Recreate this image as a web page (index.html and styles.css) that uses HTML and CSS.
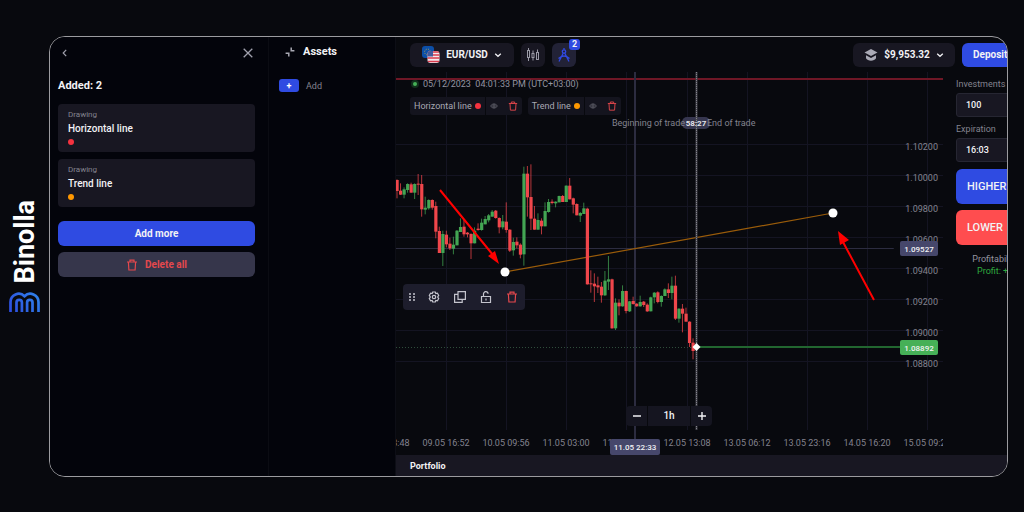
FILE: index.html
```html
<!DOCTYPE html>
<html lang="en">
<head>
<meta charset="utf-8">
<title>Binolla</title>
<link rel="stylesheet" href="styles.css">
</head>
<body>
<svg class="defs" aria-hidden="true">
  <symbol id="trash" viewBox="0 0 12 12"><path d="M1 3h10M4 3V1.2h4V3M2.4 3l.5 8h6.2l.5-8" fill="none" stroke="currentColor" stroke-width="1.2"/></symbol>
  <symbol id="eye" viewBox="0 0 12 12"><path d="M.8 6Q6 -.4 11.200 6 6 12.400 .8 6z" fill="none" stroke="currentColor" stroke-width="1.300"/><circle cx="6" cy="6" r="1.800" fill="none" stroke="currentColor" stroke-width="1.300"/></symbol>
  <symbol id="chevron" viewBox="0 0 8 8"><path d="M1.200 2.800 4 5.300 6.800 2.800" fill="none" stroke="currentColor" stroke-width="1.300"/></symbol>
</svg>

<aside class="brand">
  <span class="brand-name">Binolla</span>
  <svg class="brand-logo" viewBox="0 0 31 20">
    <defs><linearGradient id="logo" gradientUnits="userSpaceOnUse" x1="0" y1="20" x2="31" y2="0"><stop offset="0" stop-color="#2d4be0"/><stop offset="1" stop-color="#2f86ea"/></linearGradient></defs>
    <g fill="none" stroke="url(#logo)" stroke-width="2.700">
      <path d="M1.500 20V10A8.200 8.200 0 0 1 15.500 4.200 8.200 8.200 0 0 1 29.500 10V20"/>
      <path d="M7.500 20v-9.500a2.700 2.700 0 0 1 5.400 0V20M18.100 20v-9.500a2.700 2.700 0 0 1 5.400 0V20"/>
    </g>
  </svg>
</aside>

<div class="frame">
  <section class="drawings">
    <header class="drawings-head">
      <button class="bare" aria-label="Back"><svg class="i8" viewBox="0 0 8 8"><path d="M5.200.8 2.200 4l3 3.200" fill="none" stroke="currentColor" stroke-width="1.200"/></svg></button>
      <button class="bare" aria-label="Close"><svg class="i10" viewBox="0 0 10 10"><path d="M.7.7l8.600 8.600M9.300.7.7 9.300" stroke="currentColor" stroke-width="1.300"/></svg></button>
    </header>
    <h2 class="added">Added: 2</h2>
    <article class="card"><span class="card-kind">Drawing</span><span class="card-title">Horizontal line</span><i class="dot red"></i></article>
    <article class="card"><span class="card-kind">Drawing</span><span class="card-title">Trend line</span><i class="dot orange"></i></article>
    <button class="wide primary">Add more</button>
    <button class="wide muted"><svg class="i12"><use href="#trash"/></svg>Delete all</button>
  </section>

  <section class="assets">
    <h2 class="assets-title"><svg class="i10" viewBox="0 0 10 10"><path d="M6.200.6v3.200h3.200M.6 6.200h3.200v3.200" fill="none" stroke="#a9a9b4" stroke-width="1.500"/></svg>Assets</h2>
    <div class="assets-add"><button class="plus" id="add" aria-label="Add asset">+</button><label for="add">Add</label></div>
  </section>

  <main class="main">
    <header class="topbar">
      <button class="box pair">
        <svg class="flags" viewBox="0 0 18 18">
          <rect width="12" height="12" rx="3" fill="#0c4fa8"/>
          <circle cx="5.500" cy="6" r="2.900" fill="none" stroke="#b3a24a" stroke-width="1" stroke-dasharray="1 1.300"/>
          <clipPath id="us"><rect x="5.500" y="5" width="12" height="12" rx="3"/></clipPath>
          <g clip-path="url(#us)"><rect x="5" y="5" width="13" height="13" fill="#f1e9ec"/><path d="M5 6h13M5 9h13M5 12h13M5 15.400h13" stroke="#d93a4c" stroke-width="1.500"/><rect x="5" y="5" width="6" height="5.500" fill="#43599a"/></g>
        </svg>
        <span>EUR/USD</span><svg class="i8"><use href="#chevron"/></svg>
      </button>
      <button class="box square" aria-label="Chart type"><svg class="i14" viewBox="0 0 14 14"><g fill="none" stroke="#9a9aa6"><rect x="1.500" y="2.500" width="2" height="7"/><rect x="6" y="5.500" width="2" height="4"/><rect x="10.500" y="4.500" width="2" height="7"/><path d="M2.500 0v2.500M2.500 9.500V13M7 2.500v3M7 9.500v3M11.500 1.500v3"/></g></svg></button>
      <button class="box square active" aria-label="Drawings"><svg class="i14" viewBox="0 0 14 14"><g fill="none" stroke="#3048e0" stroke-width="1.300"><circle cx="7" cy="3.500" r="1.700"/><path d="M7 0v1.800M6.300 5 2 13.500M7.700 5 12 13.500M1.500 10.500Q7 5.500 12.500 10.500"/></g></svg><span class="badge">2</span></button>
      <button class="box balance"><svg class="i14" viewBox="0 0 14 14"><path d="M7 1 13.500 4.500 7 8 .5 4.500z" fill="#aaaab6"/><path d="M2 7.300 7 10l5-2.700v2.900C10.500 13.500 3.500 13.500 2 10.200z" fill="#aaaab6"/></svg><span>$9,953.32</span><svg class="i8"><use href="#chevron"/></svg></button>
      <button class="deposit">Deposit</button>
    </header>

    <div class="work">
      <div class="chart">
        <svg class="plot" id="plot">
          <g id="grid"></g>
          <line class="alert" x1="0" y1="7" x2="100%" y2="7"/>
          <line class="cross" x1="239" y1="0" x2="239" y2="368"/>
          <line class="cross thin" x1="0" y1="176.500" x2="91%" y2="176.500"/>
          <line class="trend" x1="109" y1="200" x2="437" y2="141"/>
          <line class="open-line" x1="0" y1="275.500" x2="300" y2="275.500"/>
          <line class="price-line" x1="300" y1="275" x2="93%" y2="275"/>
          <g id="candles" transform="translate(1 68)"></g>
          <rect x="286" y="45" width="28" height="12" rx="5" fill="#36364f"/>
          <line class="expiry" x1="300.500" y1="0" x2="300.500" y2="358"/>
          <line class="expiry-dots" x1="300.500" y1="0" x2="300.500" y2="358"/>
          <text class="label" x="289" y="54" text-anchor="end">Beginning of trade</text>
          <text class="pill-text" x="300" y="54" text-anchor="middle">58:27</text>
          <text class="label" x="311" y="54">End of trade</text>
          <circle cx="109" cy="200" r="4.500" fill="#fff"/>
          <circle cx="437" cy="141" r="4.500" fill="#fff"/>
          <path d="M300.500 271l4 4-4 4-4-4z" fill="#fff"/>
          <g fill="#f00" stroke="#f00"><path d="M44 118l53 65M478 228l-31-58" stroke-width="2"/><path d="M103 192l-11-8 7-5zM442 159l2 14 9-5z" stroke="none"/></g>
          <g id="dates"></g>
          <rect x="214" y="367" width="50" height="16" rx="2" fill="#46476b"/>
          <text class="tag-text" x="239" y="378" text-anchor="middle">11.05 22:33</text>
          <svg x="100%" overflow="visible">
            <g id="prices"></g>
            <rect x="-43" y="169" width="38" height="15" rx="2" fill="#46476b"/>
            <text class="tag-text" x="-24" y="180" text-anchor="middle">1.09527</text>
            <rect x="-43" y="268" width="38" height="15" rx="2" fill="#46b057"/>
            <text class="tag-text" x="-24" y="279" text-anchor="middle">1.08892</text>
          </svg>
        </svg>

        <div class="legend">
          <div class="clock"><i class="live"></i>05/12/2023&nbsp; 04:01:33 PM (UTC+03:00)</div>
          <div class="chips">
            <div class="chip"><span class="chip-name">Horizontal line<i class="dot red"></i></span><span class="chip-tools"><button class="bare" aria-label="Hide"><svg class="i8"><use href="#eye"/></svg></button><button class="bare danger" aria-label="Delete"><svg class="i10"><use href="#trash"/></svg></button></span></div>
            <div class="chip"><span class="chip-name">Trend line<i class="dot orange"></i></span><span class="chip-tools"><button class="bare" aria-label="Hide"><svg class="i8"><use href="#eye"/></svg></button><button class="bare danger" aria-label="Delete"><svg class="i10"><use href="#trash"/></svg></button></span></div>
          </div>
        </div>

        <div class="tools">
          <button class="tool grip" aria-label="Move"><svg class="i10" viewBox="0 0 10 10"><path d="M2 2h2M6 2h2M2 5h2M6 5h2M2 8h2M6 8h2" stroke="currentColor" stroke-width="1.500"/></svg></button>
          <button class="tool" aria-label="Settings"><svg class="i12" viewBox="0 0 12 12"><path d="M4.700 1h2.600l.5 1.500 1.600-.3 1.300 2.200L9.700 6l1 1.600-1.300 2.200-1.600-.3-.5 1.500H4.700l-.5-1.500-1.600.3-1.300-2.200L2.300 6l-1-1.600 1.300-2.200 1.600.3z" fill="none" stroke="currentColor" stroke-width="1.200"/><circle cx="6" cy="6" r="1.700" fill="none" stroke="currentColor" stroke-width="1.200"/></svg></button>
          <button class="tool" aria-label="Duplicate"><svg class="i12" viewBox="0 0 12 12"><path d="M4 .6h7.400v7.800H4zM4 3.400H.6v8h7.600V8.400" fill="none" stroke="currentColor" stroke-width="1.200"/></svg></button>
          <button class="tool" aria-label="Unlock"><svg class="i12" viewBox="0 0 12 12"><path d="M1.500 5.500h9v6h-9zM3.500 5.500V3.200a2.300 2.300 0 0 1 4.600-.4M6 7.500v2" fill="none" stroke="currentColor" stroke-width="1.200"/></svg></button>
          <button class="tool danger" aria-label="Delete"><svg class="i12"><use href="#trash"/></svg></button>
        </div>

        <div class="zoom">
          <button class="zoom-btn" aria-label="Zoom out"><svg class="i8" viewBox="0 0 8 8"><path d="M0 4h8" stroke="currentColor" stroke-width="1.400"/></svg></button>
          <button class="zoom-btn period">1h</button>
          <button class="zoom-btn" aria-label="Zoom in"><svg class="i8" viewBox="0 0 8 8"><path d="M0 4h8M4 0v8" stroke="currentColor" stroke-width="1.400"/></svg></button>
        </div>
      </div>

      <form class="trade">
        <label class="field" for="inv">Investments</label>
        <input class="input" id="inv" value="100">
        <label class="field" for="exp">Expiration</label>
        <input class="input" id="exp" value="16:03">
        <button class="order higher" type="button">HIGHER</button>
        <button class="order lower" type="button">LOWER</button>
        <p class="profitability">Profitability</p>
        <p class="profit">Profit: +</p>
      </form>
    </div>

    <footer class="portfolio">Portfolio</footer>
  </main>
</div>
<script src="chart.js"></script>
</body>
</html>
```

FILE: styles.css
```css
* { box-sizing: border-box; }
body {
  margin: 0;
  min-height: 100vh;
  display: grid;
  grid-template-columns: 49px 1fr;
  background: #08090e;
  color: #f2f2f5;
  font: 9px/12px Roboto, sans-serif;
}
button, input { font: inherit; color: inherit; border: 0; padding: 0; margin: 0; }
h2, p { margin: 0; }
svg { display: block; flex: none; }
.defs { position: absolute; width: 0; height: 0; }
.i8 { width: 8px; height: 8px; }
.i10 { width: 10px; height: 10px; }
.i12 { width: 12px; height: 12px; }
.i14 { width: 14px; height: 14px; }
.bare { display: flex; background: none; color: #a0a0ad; }
.danger { color: #e5484d; }
.dot { display: block; width: 6px; height: 6px; border-radius: 50%; }
.red { background: #f5323f; }
.orange { background: #ff9800; }

.brand { display: flex; flex-direction: column; align-items: center; justify-content: center; gap: 9px; }
.brand-name {
  writing-mode: vertical-rl;
  transform: rotate(180deg);
  font-size: 27px;
  line-height: 32px;
  font-weight: 700;
  color: #fff;
}
.brand-logo { width: 31px; height: 20px; }

.frame {
  display: flex;
  margin: 36px 16px 35px 0;
  border: 1px solid #9b9b9f;
  border-radius: 16px;
  overflow: hidden;
}

.drawings {
  flex: 0 0 219px;
  display: flex;
  flex-direction: column;
  padding: 10px 13px 0 8px;
  background: #03040b;
  border-right: 1px solid #0b0c13;
}
.drawings-head { display: flex; justify-content: space-between; align-items: center; height: 12px; padding: 0 2px 0 3px; }
.added { margin: 20px 0 11px; font-size: 11px; line-height: 14px; font-weight: 700; }
.card {
  display: flex;
  flex-direction: column;
  height: 48px;
  margin-bottom: 7px;
  padding: 5px 10px;
  border-radius: 4px;
  background: #181722;
}
.card-kind { font-size: 8px; color: #83838f; }
.card-title { font-size: 10px; line-height: 16px; font-weight: 500; margin-bottom: 2px; }
.wide {
  display: flex;
  align-items: center;
  justify-content: center;
  gap: 7px;
  height: 25px;
  margin-top: 6px;
  border-radius: 6px;
  font-size: 10px;
  font-weight: 700;
}
.primary { background: #2f4be2; margin-top: 7px; }
.muted { background: #36364b; color: #e5484d; }

.assets { flex: 0 0 127px; padding: 7px 10px; background: #03040b; border-right: 1px solid #0d0e16; }
.assets-title { display: flex; align-items: center; gap: 8px; padding-left: 6px; font-size: 11px; line-height: 16px; font-weight: 700; }
.assets-add { display: flex; align-items: center; gap: 7px; margin-top: 19px; color: #83838f; }
.plus { width: 20px; height: 13px; border-radius: 3px; background: #2f4be2; color: #fff; font-weight: 700; line-height: 12px; }

.main { flex: 1; min-width: 0; display: flex; flex-direction: column; }
.topbar { display: flex; align-items: center; gap: 7px; height: 35px; padding-left: 14px; }
.box {
  position: relative;
  display: flex;
  align-items: center;
  justify-content: center;
  height: 24px;
  border-radius: 6px;
  background: #181722;
  font-size: 10px;
  font-weight: 700;
}
.pair { width: 104px; gap: 6px; }
.flags { width: 18px; height: 18px; }
.square { width: 24px; }
.active { background: #222236; }
.badge {
  position: absolute;
  top: -4px;
  right: -4px;
  width: 11px;
  height: 11px;
  border-radius: 3px;
  background: #2f4be2;
  font-size: 9px;
  line-height: 11px;
}
.balance { width: 102px; gap: 6px; margin-left: auto; }
.deposit {
  flex: 0 0 60px;
  height: 24px;
  margin-right: -15px;
  padding-left: 11px;
  border-radius: 6px;
  background: #2f4be2;
  font-size: 10px;
  font-weight: 700;
  text-align: left;
}

.work { flex: 1; display: flex; min-height: 0; }
.chart { position: relative; flex: 1; min-width: 0; overflow: hidden; }
.plot { position: absolute; width: 100%; height: 100%; }
.grid-line { stroke: #141422; }
.alert { stroke: #6f1726; stroke-width: 2; }
.cross { stroke: #2c2c40; stroke-width: 2; }
.thin { stroke-width: 1; }
.trend { stroke: #9a5c0a; stroke-width: 1.2; }
.open-line { stroke: #2f4d3b; stroke-dasharray: 1 2; }
.price-line { stroke: #226630; stroke-width: 2; }
.expiry { stroke: #45454d; stroke-width: 2; }
.expiry-dots { stroke: #84848c; stroke-dasharray: 1 1; }
.label { font-size: 9px; fill: #83838f; }
.pill-text { font-size: 8px; font-weight: 700; fill: #e4e4ea; }
.tag-text { font-size: 8px; font-weight: 500; fill: #f2f2f5; }
.up { fill: #43a553; }
.down { fill: #f0464b; }

.legend { position: relative; padding: 5px 14px; }
.clock { display: flex; align-items: center; gap: 6px; padding-left: 3px; color: #9494a0; line-height: 14px; }
.live { width: 4px; height: 4px; border-radius: 50%; background: #46b057; box-shadow: 0 0 0 2px #11301c; }
.chips { display: flex; gap: 6px; margin-top: 6px; }
.chip { display: flex; gap: 1px; height: 18px; color: #a9a9b4; }
.chip-name, .chip-tools { display: flex; align-items: center; background: #14141e; }
.chip-name { gap: 3px; padding: 0 4px; border-radius: 3px 0 0 3px; }
.chip-tools { gap: 10px; padding: 0 4px; border-radius: 0 3px 3px 0; }
.chip-tools .bare { color: #696974; }
.chip-tools .danger { color: #d54348; }

.tools {
  position: absolute;
  left: 7px;
  top: 212px;
  display: flex;
  height: 26px;
  border-radius: 4px;
  background: #1d1d2c;
  overflow: hidden;
}
.tool { display: flex; align-items: center; justify-content: center; width: 26px; background: none; color: #c4c4cd; }
.grip { width: 18px; }
.tool.danger { color: #e5484d; }

.zoom { position: absolute; left: 230px; top: 334px; display: flex; gap: 1px; height: 20px; border-radius: 4px; overflow: hidden; }
.zoom-btn { display: flex; align-items: center; justify-content: center; width: 21px; background: #151520; font-size: 10px; font-weight: 500; }
.period { width: 42px; }

.trade { flex: 0 0 64px; display: flex; flex-direction: column; padding: 6px 0 0 13px; overflow: hidden; }
.trade > * { width: 78px; flex: none; }
.field { height: 15px; color: #83838f; }
.input { height: 24px; margin-bottom: 6px; padding: 0 9px; border: 1px solid #262632; border-radius: 3px; background: #181722; font-weight: 500; }
.order { height: 35px; margin-top: 1px; margin-bottom: 5px; padding-left: 11px; border-radius: 6px; font-size: 11px; font-weight: 500; text-align: left; }
.higher { background: #2f4be2; }
.lower { background: #ff4d4f; }
.profitability { margin-top: 3px; text-align: center; color: #9494a0; }
.profit { padding-left: 21px; color: #2faa3f; }

.portfolio { height: 21px; padding-left: 14px; background: #181722; line-height: 22px; font-weight: 700; }
```

FILE: chart.js
```javascript
const NS = 'http://www.w3.org/2000/svg';
function add(parent, name, attrs, text) {
  const el = document.createElementNS(NS, name);
  for (const key in attrs) el.setAttribute(key, attrs[key]);
  if (text) el.textContent = text;
  document.getElementById(parent).appendChild(el);
}

const dates = ['08.05 23:48', '09.05 16:52', '10.05 09:56', '11.05 03:00', '11.05 20:04', '12.05 13:08', '13.05 06:12', '13.05 23:16', '14.05 16:20', '15.05 09:24'];
dates.forEach((date, i) => {
  const x = Math.round(-10 + i * 60.1);
  add('grid', 'line', { class: 'grid-line', x1: x + .5, x2: x + .5, y1: 0, y2: 358 });
  add('dates', 'text', { class: 'label', x: x, y: 374, 'text-anchor': 'middle' }, date);
});

for (let i = 0; i < 8; i++) {
  const y = 72 + i * 31;
  add('grid', 'line', { class: 'grid-line', x1: 0, x2: '100%', y1: y + .5, y2: y + .5 });
  add('prices', 'text', { class: 'label', x: -5, y: y + 6, 'text-anchor': 'end' }, (1.102 - i * .002).toFixed(5));
}

// direction, high, body top, body bottom, low (thirds of a pixel)
const candles = `r 118 120 153 175,r 130 152 164 165,g 142 148 164 175,g 130 132 150 158,r 128 133 158 158,g 130 132 158 177,
r 102 131 134 165,r 105 132 208 230,g 170 203 209 223,g 178 180 205 209,r 178 180 203 209,r 185 198 275 295,r 260 273 339 339,
g 272 282 339 378,r 272 284 313 322,r 293 311 325 330,g 290 314 326 343,g 270 272 316 316,g 235 261 276 276,r 240 260 283 290,
r 276 278 283 292,r 280 282 310 357,g 262 272 310 310,r 250 266 270 272,g 236 248 270 272,g 228 237 253 253,g 222 226 241 247,
g 210 215 230 230,r 210 212 234 236,r 232 234 262 280,g 225 244 262 268,r 187 245 270 278,r 268 269 332 336,g 293 306 331 347,
r 292 305 316 325,r 310 314 344 355,g 80 101 343 377,r 78 101 172 230,r 73 171 236 270,r 198 236 269 269,g 220 240 269 269,
r 235 242 259 283,g 187 213 259 259,g 177 186 216 218,r 178 185 189 193,g 184 185 190 202,g 167 168 187 187,r 165 168 186 186,
g 136 137 186 186,r 114 137 178 178,r 173 175 194 220,r 190 192 226 226,g 216 219 227 246,g 188 205 222 222,r 203 206 433 434,
r 391 430 433 458,r 400 431 439 486,r 410 436 442 459,r 426 440 466 488,g 393 422 466 468,g 348 418 425 450,r 416 418 565 566,
g 475 488 565 570,r 478 488 499 526,g 436 453 499 500,r 452 453 513 520,g 483 484 514 516,r 470 483 492 494,r 490 491 499 500,
g 467 486 499 500,r 483 485 495 501,r 490 494 514 516,g 470 472 514 514,g 456 458 472 490,r 454 457 486 490,g 466 468 486 500,
g 445 448 468 468,r 430 448 459 474,g 410 437 459 478,r 407 437 536 540,g 505 506 536 548,r 492 506 521 577,r 503 521 545 545,
r 544 545 609 621,r 595 608 633 658`;
candles.split(',').forEach((row, i) => {
  const [dir, ...values] = row.trim().split(' ');
  const [high, top, bottom, low] = values.map(v => v / 3);
  const x = i * 3.524;
  const cls = dir === 'g' ? 'up' : 'down';
  add('candles', 'rect', { class: cls, x: x - .5, y: high, width: 1, height: low - high, opacity: .75 });
  add('candles', 'rect', { class: cls, x: x - 1.5, y: top, width: 3.2, height: bottom - top });
});
```
